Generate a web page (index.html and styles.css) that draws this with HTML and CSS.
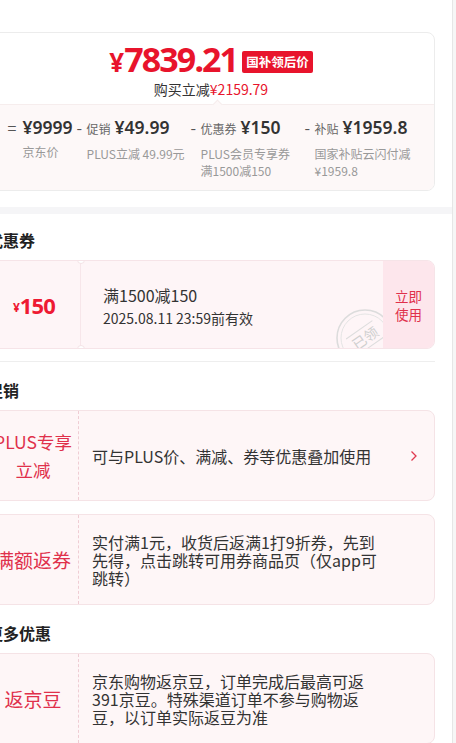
FILE: index.html
```html
<!DOCTYPE html>
<html lang="zh-CN">
<head>
<meta charset="utf-8">
<link rel="stylesheet" href="styles.css">
</head>
<body>
<div class="panel">
  <div class="price-card">
    <div class="price-top">
      <div class="price-line">
        <span class="p-yen">¥</span><span class="p-num">7839.21</span><span class="badge">国补领后价</span>
      </div>
      <div class="save">购买立减<span class="save-red">¥2159.79</span></div>
    </div>
    <div class="breakdown">
      <span class="pointer"></span>
      <div class="bd-row">
        <div class="bd-item">
          <span class="op op-eq">=</span>
          <div class="bd-col">
            <div class="bd-val">¥9999</div>
            <div class="bd-desc">京东价</div>
          </div>
        </div>
        <div class="bd-item">
          <span class="op">-</span>
          <div class="bd-col fixed">
            <div class="bd-val"><span class="bd-lab">促销</span>¥49.99</div>
            <div class="bd-desc">PLUS立减 49.99元</div>
          </div>
        </div>
        <div class="bd-item">
          <span class="op">-</span>
          <div class="bd-col fixed">
            <div class="bd-val"><span class="bd-lab">优惠券</span>¥150</div>
            <div class="bd-desc">PLUS会员专享券<br>满1500减150</div>
          </div>
        </div>
        <div class="bd-item">
          <span class="op">-</span>
          <div class="bd-col fixed">
            <div class="bd-val"><span class="bd-lab">补贴</span>¥1959.8</div>
            <div class="bd-desc">国家补贴云闪付减<br>¥1959.8</div>
          </div>
        </div>
      </div>
    </div>
  </div>

  <div class="band"></div>

  <h3 class="sec-title first">优惠券</h3>
  <div class="coupon">
    <div class="c-left"><span class="c-yen">¥</span><span class="c-amt">150</span></div>
    <div class="c-mid">
      <div class="c-title">满1500减150</div>
      <div class="c-date">2025.08.11 23:59前有效</div>
      <svg class="stamp" width="64" height="64" viewBox="0 0 64 64">
        <circle cx="32" cy="32" r="28" fill="none" stroke="#dcdcdc" stroke-width="1.6"/>
        <circle cx="32" cy="32" r="24" fill="none" stroke="#e4e4e4" stroke-width="1"/>
        <g transform="rotate(-35 32 32)">
          <line x1="16" y1="22" x2="48" y2="22" stroke="#dddddd" stroke-width="1"/>
          <line x1="16" y1="42" x2="48" y2="42" stroke="#dddddd" stroke-width="1"/>
          <text x="32" y="37.5" text-anchor="middle" class="stamp-text">已领</text>
        </g>
      </svg>
    </div>
    <div class="c-right">立即<br>使用</div>
  </div>

  <div class="divider"></div>

  <h3 class="sec-title">促销</h3>
  <div class="promo">
    <div class="pr-left small">PLUS专享<br>立减</div>
    <div class="pr-body">
      <div class="pr-text">可与PLUS价、满减、券等优惠叠加使用</div>
      <svg class="chev" width="8" height="12" viewBox="0 0 8 12"><path d="M1.5 1.5 L6 6 L1.5 10.5" fill="none" stroke="#e0384f" stroke-width="1.3"/></svg>
    </div>
  </div>
  <div class="promo gap">
    <div class="pr-left">满额返券</div>
    <div class="pr-body">
      <div class="pr-text">实付满1元，收货后返满1打9折券，先到先得，点击跳转可用券商品页（仅app可跳转）</div>
    </div>
  </div>

  <h3 class="sec-title more">更多优惠</h3>
  <div class="promo">
    <div class="pr-left">返京豆</div>
    <div class="pr-body">
      <div class="pr-text">京东购物返京豆，订单完成后最高可返391京豆。特殊渠道订单不参与购物返豆，以订单实际返豆为准</div>
    </div>
  </div>
</div>
</body>
</html>
```

FILE: styles.css
```css
html, body {
  margin: 0;
  padding: 0;
}
body {
  background: #f6f6f6;
  font-family: "Noto Sans CJK SC", "Noto Sans", sans-serif;
  color: #333;
  overflow: hidden;
}
.panel {
  margin-left: -30px;
  width: 483px;
  box-sizing: border-box;
  background: #fff;
  border-right: 1px solid #e6e6e6;
  padding: 32px 17px 40px;
  min-height: 800px;
}

/* price card */
.price-card {
  border: 1px solid #ececec;
  border-radius: 8px;
  overflow: hidden;
}
.price-top {
  padding: 7px 0 5px;
  text-align: center;
}
.price-line {
  display: flex;
  justify-content: center;
  align-items: center;
  height: 39px;
  color: #e8142c;
}
.p-yen {
  font-family: "Noto Sans", sans-serif;
  font-weight: 700;
  font-size: 26px;
  margin-top: 4px;
}
.p-num {
  font-family: "Noto Sans", sans-serif;
  font-weight: 700;
  font-size: 34px;
  letter-spacing: -1.9px;
  line-height: 39px;
}
.badge {
  margin-left: 5px;
  margin-top: 4px;
  background: #e8142c;
  color: #fff;
  font-size: 12.5px;
  font-weight: 700;
  line-height: 22px;
  padding: 0 4px;
  border-radius: 2px;
}
.save {
  font-size: 14px;
  line-height: 20px;
  color: #333;
}
.save-red {
  color: #e8142c;
}

.breakdown {
  position: relative;
  background: #fdf8f8;
  border-top: 1px solid #f6eded;
  padding: 11px 0 11px;
}
.pointer {
  position: absolute;
  top: -4px;
  left: 226px;
  width: 6px;
  height: 6px;
  background: #fdf8f8;
  border-left: 1px solid #f6eded;
  border-top: 1px solid #f6eded;
  transform: rotate(45deg);
}
.bd-row {
  display: flex;
  justify-content: center;
  gap: 4px;
}
.bd-item {
  display: flex;
  align-items: flex-start;
}
.op {
  width: 10px;
  font-size: 16px;
  line-height: 22px;
  color: #555;
}
.op-eq {
  width: 15px;
}
.bd-col.fixed {
  width: 100px;
}
.bd-val {
  font-family: "Noto Sans", "Noto Sans CJK SC", sans-serif;
  font-size: 17.5px;
  font-weight: 600;
  line-height: 22px;
  color: #333;
  white-space: nowrap;
}
.bd-lab {
  font-family: "Noto Sans CJK SC", sans-serif;
  font-size: 12px;
  font-weight: 400;
  color: #666;
  margin-right: 4px;
}
.bd-desc {
  margin-top: 5px;
  font-size: 12px;
  line-height: 17px;
  color: #999;
}

.band {
  margin: 16px -17px 0;
  height: 7px;
  background: #f5f5f7;
}

.sec-title {
  margin: 17px 0 9px;
  font-size: 16px;
  font-weight: 700;
  line-height: 22px;
  color: #222;
}
.sec-title.first {
  margin-top: 15px;
}
.sec-title.more {
  margin-top: 17px;
}

/* coupon */
.coupon {
  display: flex;
  height: 89px;
  box-sizing: border-box;
  border: 1px solid #f6e4e8;
  border-radius: 8px;
  overflow: hidden;
  background: #fef5f7;
}
.c-left {
  position: relative;
  width: 92px;
  flex: none;
  display: flex;
  justify-content: center;
  align-items: center;
  color: #ee1a33;
  border-right: 1px solid #f7e6ea;
}
.c-left::before, .c-left::after {
  content: "";
  position: absolute;
  right: -5px;
  width: 8px;
  height: 8px;
  border-radius: 50%;
  background: #fff;
  border: 1px solid #f3e3e6;
  box-sizing: border-box;
}
.c-left::before { top: -5px; }
.c-left::after { bottom: -5px; }
.c-yen {
  font-family: "Noto Sans", sans-serif;
  font-size: 12px;
  font-weight: 700;
  margin-top: 6px;
}
.c-amt {
  font-family: "Noto Sans", sans-serif;
  font-size: 22px;
  font-weight: 700;
  letter-spacing: -0.8px;
}
.c-mid {
  position: relative;
  flex: 1;
  display: flex;
  flex-direction: column;
  justify-content: center;
  padding-left: 22px;
  padding-top: 2px;
}
.c-title {
  font-size: 16px;
  line-height: 22px;
  color: #333;
}
.c-date {
  margin-top: 2px;
  font-size: 14px;
  line-height: 20px;
  color: #333;
}
.stamp {
  position: absolute;
  right: -14px;
  bottom: -22px;
}
.stamp-text {
  font-family: "Noto Sans CJK SC", sans-serif;
  font-size: 14px;
  fill: #cfcfcf;
}
.c-right {
  width: 51px;
  flex: none;
  background: #fde6ec;
  display: flex;
  align-items: center;
  justify-content: center;
  text-align: center;
  color: #e0304b;
  font-size: 13.5px;
  line-height: 18px;
  position: relative;
  z-index: 1;
}

.divider {
  margin-top: 12px;
  height: 1px;
  background: #eeeeee;
}

/* promo */
.promo {
  display: flex;
  height: 91px;
  box-sizing: border-box;
  border: 1px solid #f5e3e6;
  border-radius: 8px;
  background: #fef6f7;
}
.promo.gap {
  margin-top: 13px;
}
.pr-left {
  width: 91px;
  flex: none;
  box-sizing: border-box;
  border-right: 1px dashed #efcdd4;
  display: flex;
  align-items: center;
  justify-content: center;
  text-align: center;
  color: #e0304b;
  font-size: 19px;
  line-height: 28px;
}
.pr-left.small {
  font-size: 17.5px;
}
.pr-body {
  flex: 1;
  display: flex;
  align-items: center;
  padding-left: 13px;
  padding-right: 16px;
}
.pr-text {
  width: 285px;
  font-size: 16px;
  line-height: 18px;
  color: #333;
}
.chev {
  margin-left: auto;
}
```
